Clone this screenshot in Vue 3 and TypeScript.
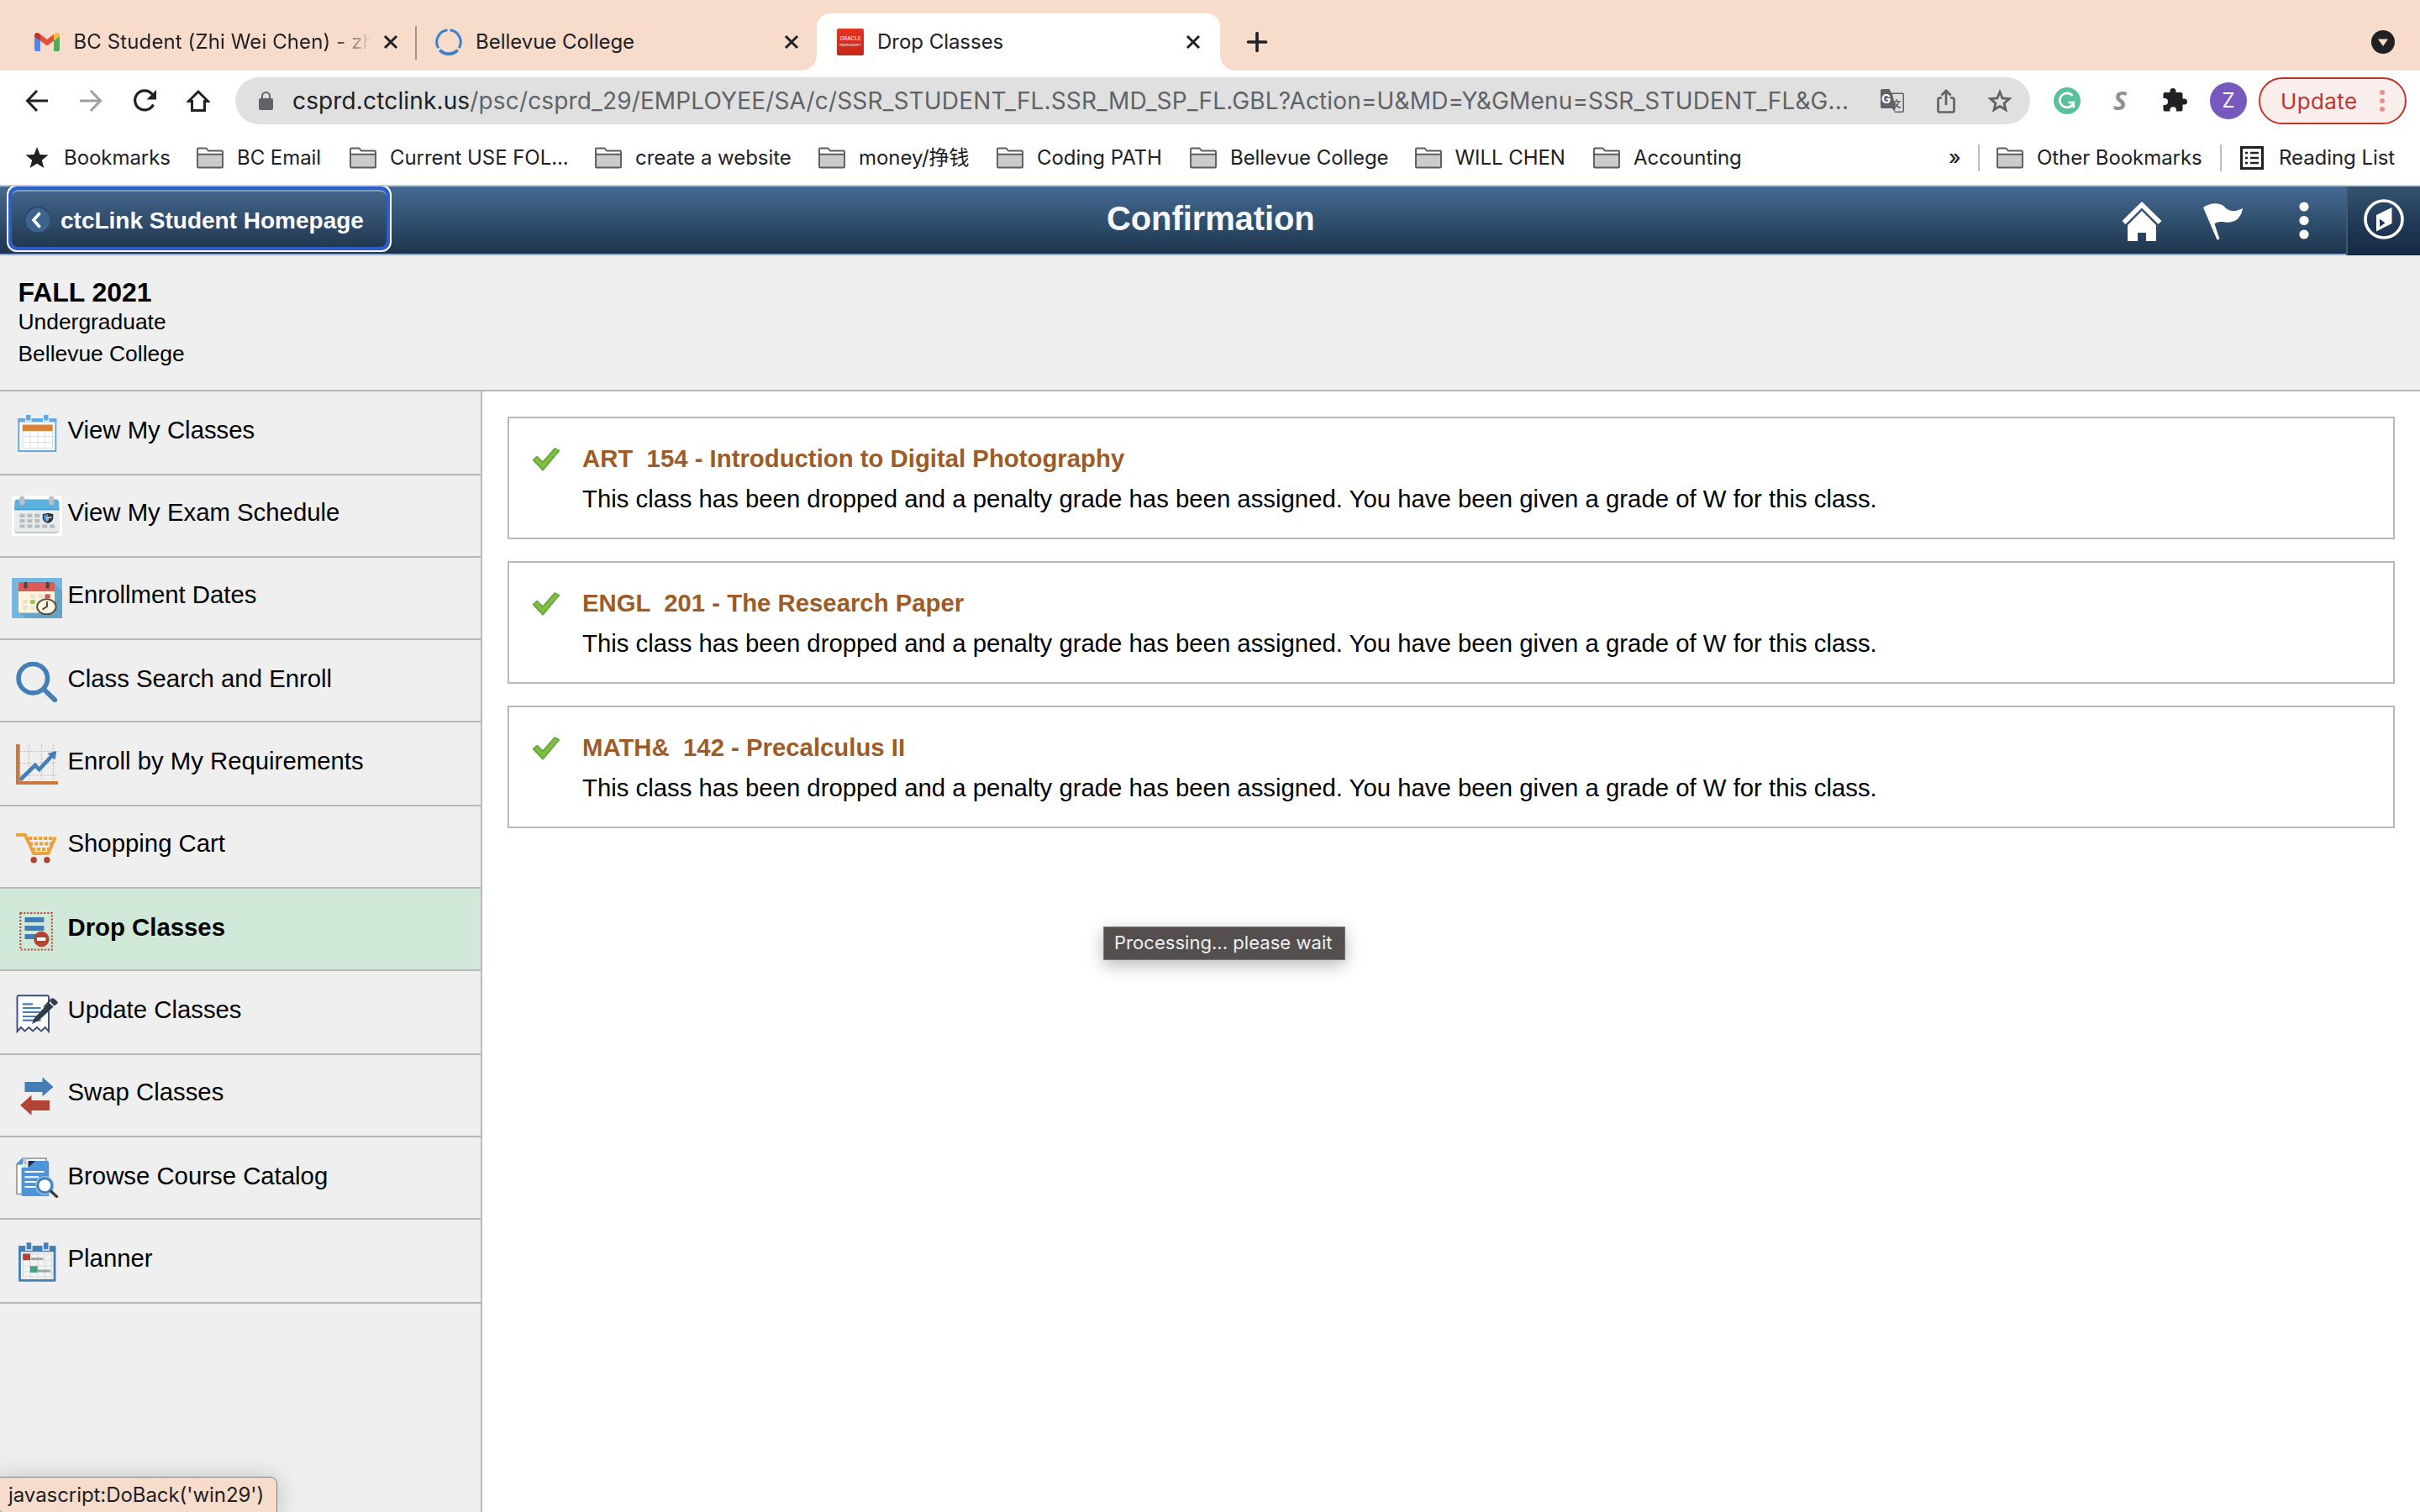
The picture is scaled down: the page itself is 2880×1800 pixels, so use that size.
<script setup lang="ts">
interface Bookmark {
  label: string
  width: number
}
interface NavItem {
  id: string
  label: string
}
interface DroppedClass {
  title: string
  message: string
}

const bookmarks: Bookmark[] = [
  { label: 'BC Email', width: 182 },
  { label: 'Current USE FOL...', width: 292 },
  { label: 'create a website', width: 266 },
  { label: 'money/挣钱', width: 212 },
  { label: 'Coding PATH', width: 230 },
  { label: 'Bellevue College', width: 267.5 },
  { label: 'WILL CHEN', width: 212.5 },
  { label: 'Accounting', width: 200 },
]

const navItems: NavItem[] = [
  { id: 'classes', label: 'View My Classes' },
  { id: 'exam', label: 'View My Exam Schedule' },
  { id: 'dates', label: 'Enrollment Dates' },
  { id: 'search', label: 'Class Search and Enroll' },
  { id: 'requirements', label: 'Enroll by My Requirements' },
  { id: 'cart', label: 'Shopping Cart' },
  { id: 'drop', label: 'Drop Classes' },
  { id: 'update', label: 'Update Classes' },
  { id: 'swap', label: 'Swap Classes' },
  { id: 'catalog', label: 'Browse Course Catalog' },
  { id: 'planner', label: 'Planner' },
]
const activeId = 'drop'

const message =
  'This class has been dropped and a penalty grade has been assigned. You have been given a grade of W for this class.'
const dropped: DroppedClass[] = [
  { title: 'ART  154 - Introduction to Digital Photography', message },
  { title: 'ENGL  201 - The Research Paper', message },
  { title: 'MATH&  142 - Precalculus II', message },
]
</script>

<template>
  <div class="window">
    <div class="tabstrip">
      <div class="tab tab-mail">
        <svg class="fav-mail" width="30" height="22" viewBox="0 0 30 22">
          <path d="M0 3V20a2 2 0 0 0 2 2H7V8.500L0 3.200Z" fill="#4c86f5" />
          <path d="M30 3V20a2 2 0 0 1-2 2H23V8.500L30 3.200Z" fill="#55a75a" />
          <path d="M7 1.800L15 8L23 1.800V9.500L15 15.600L7 9.500Z" fill="#e14e3c" />
          <path d="M0 5V3C0 .4 3-.9 5 .6L7 2V9.500L0 4.500Z" fill="#bb3529" />
          <path d="M30 5V3C30 .4 27-.9 25 .6L23 2V9.500L30 4.500Z" fill="#f3bd42" />
        </svg>
        <span class="tab-title fade">BC Student (Zhi Wei Chen) - zh</span>
        <svg class="close" width="18" height="18" viewBox="0 0 18 18"><path d="M2 2L16 16M16 2L2 16" /></svg>
      </div>
      <div class="tab tab-bc">
        <svg class="fav-bc" width="32" height="32" viewBox="0 0 32 32">
          <g fill="none" stroke="#3c82c8" stroke-width="3">
            <path d="M14.500 1.800A14.300 14.300 0 0 0 3.700 23.200" />
            <path d="M17.500 1.800A14.300 14.300 0 0 1 28.300 23.200" />
            <path d="M5.400 25.500A14.300 14.300 0 0 0 26.600 25.500" stroke-width="4" />
          </g>
        </svg>
        <span class="tab-title">Bellevue College</span>
        <svg class="close" width="18" height="18" viewBox="0 0 18 18"><path d="M2 2L16 16M16 2L2 16" /></svg>
      </div>
      <div class="tab tab-active">
        <span class="fav-oracle"><i>ORACLE</i><i class="ps">PEOPLESOFT</i></span>
        <span class="tab-title">Drop Classes</span>
        <svg class="close" width="18" height="18" viewBox="0 0 18 18"><path d="M2 2L16 16M16 2L2 16" /></svg>
      </div>
      <svg class="new-tab" width="26" height="26" viewBox="0 0 26 26">
        <path d="M13 2.500V23.500M2.500 13H23.500" stroke="#1f2023" stroke-width="3.600" stroke-linecap="round" />
      </svg>
      <svg class="tab-search" width="28" height="28" viewBox="0 0 28 28">
        <circle cx="14" cy="14" r="14" fill="#202124" />
        <path d="M8 10.500H20L14 19Z" fill="#f7dccb" />
      </svg>
    </div>

    <div class="toolbar">
      <svg class="tb-back" width="28" height="28" viewBox="0 0 28 28">
        <path d="M27 14H3M14 2L2.500 14L14 26" fill="none" stroke="#202124" stroke-width="3" />
      </svg>
      <svg class="tb-forward" width="28" height="28" viewBox="0 0 28 28">
        <path d="M1 14H25M14 2L25.500 14L14 26" fill="none" stroke="#9d9ea0" stroke-width="3" />
      </svg>
      <svg class="tb-reload" width="30" height="28" viewBox="0 0 30 28">
        <path d="M24.500 18.500A11.500 11.500 0 1 1 22.500 5.500L25 8.200" fill="none" stroke="#202124" stroke-width="3.200" />
        <path d="M28 1V12.500H16.500Z" fill="#202124" />
      </svg>
      <svg class="tb-home" width="28" height="28" viewBox="0 0 28 28">
        <path d="M14 3L2.500 14.500H6.500V25.500H21.500V14.500H25.500Z" fill="none" stroke="#202124" stroke-width="3" />
      </svg>
      <div class="omnibox">
        <svg class="lock" width="17" height="22" viewBox="0 0 17 22">
          <rect x="0" y="8" width="17" height="14" rx="2" fill="#5f6368" />
          <path d="M4 9V5.500a4.500 4.500 0 0 1 9 0V9" fill="none" stroke="#5f6368" stroke-width="2" />
        </svg>
        <span class="url"><b>csprd.ctclink.us</b>/psc/csprd_29/EMPLOYEE/SA/c/SSR_STUDENT_FL.SSR_MD_SP_FL.GBL?Action=U&amp;MD=Y&amp;GMenu=SSR_STUDENT_FL&amp;G...</span>
        <svg class="ob-translate" width="28" height="28" viewBox="0 0 28 28">
          <path d="M2 0H10.500L13 4.500H26a2 2 0 0 1 2 2V26a2 2 0 0 1-2 2H17L14 23H2a2 2 0 0 1-2-2V2a2 2 0 0 1 2-2Z" fill="#5f6368" />
          <path d="M14 6H25.500a1 1 0 0 1 1 1V25.500a1 1 0 0 1-1 1H16.500L18 22Z" fill="#e0e0e0" />
          <text x="1" y="16.500" font-size="15" font-weight="700" fill="#fff">G</text>
          <text x="13.500" y="22" font-size="11" font-weight="700" fill="#5f6368">文</text>
        </svg>
        <svg class="ob-share" width="22" height="29" viewBox="0 0 22 29">
          <path d="M6 10.500H3.500a2 2 0 0 0-2 2V25.500a2 2 0 0 0 2 2H18.500a2 2 0 0 0 2-2V12.500a2 2 0 0 0-2-2H16M11 19V2.500M5.500 7.500L11 2L16.500 7.500" fill="none" stroke="#5f6368" stroke-width="2.700" />
        </svg>
        <svg class="ob-star" width="30" height="29" viewBox="0 0 30 29">
          <path d="M15 3.500L18.100 11L26.200 11.600L20 16.900L22 24.800L15 20.500L8 24.800L10 16.900L3.800 11.600L11.900 11Z" fill="none" stroke="#5f6368" stroke-width="2.800" />
        </svg>
      </div>
      <svg class="ext-g" width="32" height="32" viewBox="0 0 32 32">
        <circle cx="16" cy="16" r="16" fill="#58c09b" />
        <path d="M22.500 10A8.500 8.500 0 1 0 23.300 19.500M17.500 18H23.800V24.500" fill="none" stroke="#fff" stroke-width="2.600" />
      </svg>
      <span class="ext-s">S</span>
      <svg class="ext-puzzle" width="30" height="30" viewBox="0 0 30 30">
        <path d="M2.500 6H8.500V4.500a3.500 3.500 0 0 1 7 0V6H21.500a2 2 0 0 1 2 2V13.500H25.500a3.500 3.500 0 0 1 0 7H23.500V26.500a2 2 0 0 1-2 2H16V27a3.800 3.800 0 0 0-7.600 0V28.500H2.500a2 2 0 0 1-2-2V21H2a4 4 0 0 0 0-8H.5V8a2 2 0 0 1 2-2Z" fill="#202124" />
      </svg>
      <span class="avatar">Z</span>
      <div class="update">
        <span>Update</span>
        <svg width="6" height="28" viewBox="0 0 6 28">
          <circle cx="3" cy="4" r="3" fill="#ec9188" />
          <circle cx="3" cy="14" r="3" fill="#ec9188" />
          <circle cx="3" cy="24" r="3" fill="#ec9188" />
        </svg>
      </div>
    </div>

    <div class="bookmarks">
      <div class="bm bm-star">
        <svg width="28" height="26" viewBox="0 0 28 26">
          <path d="M14 0L17.500 8.900L27.500 9.600L19.800 15.700L22.300 25L14 19.800L5.700 25L8.200 15.700L.5 9.600L10.500 8.900Z" fill="#202124" />
        </svg>
        <span>Bookmarks</span>
      </div>
      <div v-for="b in bookmarks" :key="b.label" class="bm" :style="{ width: b.width + 'px' }">
        <svg class="folder" width="32" height="26" viewBox="0 0 32 26">
          <path d="M1 24V2.500a1 1 0 0 1 1-1H11.500L14 4.500H30a1 1 0 0 1 1 1V24Z" fill="#fff" />
          <rect x="1" y="9" width="30" height="15" fill="#cbcbcb" />
          <path d="M1 23.500V2.500a1 1 0 0 1 1-1H11.500L14 4.500H30a1 1 0 0 1 1 1V23.500a1 1 0 0 1-1 1H2a1 1 0 0 1-1-1ZM1 8.800H31" fill="none" stroke="#5c5c5e" stroke-width="1.900" />
        </svg>
        <span>{{ b.label }}</span>
      </div>
      <div class="bm-right">
        <span class="more">»</span>
        <i class="vline"></i>
        <div class="bm bm-other">
          <svg class="folder" width="32" height="26" viewBox="0 0 32 26">
            <path d="M1 24V2.500a1 1 0 0 1 1-1H11.500L14 4.500H30a1 1 0 0 1 1 1V24Z" fill="#fff" />
            <rect x="1" y="9" width="30" height="15" fill="#cbcbcb" />
            <path d="M1 23.500V2.500a1 1 0 0 1 1-1H11.500L14 4.500H30a1 1 0 0 1 1 1V23.500a1 1 0 0 1-1 1H2a1 1 0 0 1-1-1ZM1 8.800H31" fill="none" stroke="#5c5c5e" stroke-width="1.900" />
          </svg>
          <span>Other Bookmarks</span>
        </div>
        <i class="vline"></i>
        <div class="bm bm-reading">
          <svg width="28" height="28" viewBox="0 0 28 28">
            <rect x="1.500" y="1.500" width="25" height="25" fill="none" stroke="#202124" stroke-width="3" />
            <path d="M6 8H9M12 8H22M6 14H9M12 14H22M6 20H9M12 20H22" stroke="#202124" stroke-width="2.600" />
          </svg>
          <span>Reading List</span>
        </div>
      </div>
    </div>

    <header class="banner">
      <div class="banner-main">
        <div class="back">
          <div class="back-inner">
            <svg width="32" height="34" viewBox="0 0 32 34">
              <circle cx="16" cy="16" r="15.500" fill="#2a476a" />
              <circle cx="16" cy="17" r="14.500" fill="#3d648e" />
              <path d="M18.500 8.500L11 17L18.500 25.500" fill="none" stroke="#fff" stroke-width="3.600" />
            </svg>
            <span>ctcLink Student Homepage</span>
          </div>
        </div>
        <h1>Confirmation</h1>
        <svg class="bn-home" width="48" height="50" viewBox="0 0 48 50">
          <path d="M24 1L47.500 24L43.500 28L24 8.500L4.500 28L.5 24Z" fill="#fff" />
          <path d="M24 12L41 29V48H29V38H19V48H7V29Z" fill="#fff" />
        </svg>
        <svg class="bn-flag" width="50" height="46" viewBox="0 0 50 46">
          <path d="M1 6C8 .5 19-.5 25 4C31 11 38 12 48 7C46 20 37 25 27 23.500C20 22.500 17 23.500 14.500 25.500L20.500 43.500L17.500 44.500Z" fill="#fff" />
        </svg>
        <svg class="bn-dots" width="14" height="48" viewBox="0 0 14 48">
          <circle cx="7" cy="7" r="5.600" fill="#fff" />
          <circle cx="7" cy="23.500" r="5.600" fill="#fff" />
          <circle cx="7" cy="40" r="5.600" fill="#fff" />
        </svg>
      </div>
      <div class="banner-nav">
        <svg width="48" height="48" viewBox="0 0 48 48">
          <circle cx="24" cy="24" r="22" fill="none" stroke="#fff" stroke-width="3.600" />
          <path d="M33.500 10V29L15 38.500V19ZM19 23.500V33L25.500 28.500Z" fill="#fff" fill-rule="evenodd" />
        </svg>
      </div>
    </header>

    <section class="term">
      <h2>FALL 2021</h2>
      <p>Undergraduate</p>
      <p>Bellevue College</p>
    </section>

    <div class="content">
      <nav class="sidebar">
        <div v-for="n in navItems" :key="n.id" class="row" :class="{ active: n.id === activeId }">
          <svg class="row-icon" width="60" height="48" viewBox="0 0 60 48">
            <template v-if="n.id === 'classes'">
              <rect x="8.300" y="7" width="44" height="38" fill="#fff" stroke="#64a9e0" stroke-width="2" />
              <rect x="7.300" y="6" width="46" height="4.500" fill="#64a9e0" />
              <rect x="16" y="2" width="7.500" height="8" fill="#efefef" />
              <rect x="37" y="2" width="7.500" height="8" fill="#efefef" />
              <rect x="17" y="2" width="5.500" height="6.500" fill="#64a9e0" />
              <rect x="38" y="2" width="5.500" height="6.500" fill="#64a9e0" />
              <path d="M13 21V41.500H48.500V21M13 27.500H48.500M13 34.500H48.500M22 21V41.500M31 21V41.500M39.500 21V41.500" fill="none" stroke="#dcdfe1" stroke-width="1.200" />
              <rect x="12.700" y="13.500" width="36" height="7.700" fill="#d98339" />
            </template>
            <template v-else-if="n.id === 'exam'">
              <rect width="60" height="48" fill="#fff" />
              <path d="M3.300 12V41a4 4 0 0 0 4 4H52.300a4 4 0 0 0 4-4V12Z" fill="#bfc6c8" />
              <path d="M3.300 12V39a4 4 0 0 0 4 4H52.300a4 4 0 0 0 4-4V12Z" fill="#e9ecee" />
              <path d="M3.300 17.300V8.500a4 4 0 0 1 4-4H52.300a4 4 0 0 1 4 4V17.300Z" fill="#5ab1df" />
              <path d="M3.300 15.800H56.300V17.300H3.300Z" fill="#4a9fcf" />
              <rect x="9.300" y=".5" width="6" height="11" rx="3" fill="#b9c1c4" />
              <rect x="44.300" y=".5" width="6" height="11" rx="3" fill="#b9c1c4" />
              <path d="M9.500 23.800H33.300M9.500 30.100H33.300M9.500 36.500H51.500" stroke="#b5bcbe" stroke-width="4.200" stroke-dasharray="6 2.900" />
              <path d="M36.700 22L43 20.800L49.300 22V26.500C49.300 30 46 32 43 33C40 32 36.700 30 36.700 26.500Z" fill="#2c3338" />
              <path d="M38 23L43 22V31.500C40 30.500 38 28.500 38 26.500Z" fill="#4a8fc9" />
              <path d="M41 25H47.500V27H44V29.500H41Z" fill="#aebbc4" />
            </template>
            <template v-else-if="n.id === 'dates'">
              <rect width="60" height="48" fill="#75b8df" />
              <path d="M51 7L60 16V48H17L10 41.500H51Z" fill="#68a4c8" />
              <path d="M8 15H51V39.500a2 2 0 0 1-2 2H10a2 2 0 0 1-2-2Z" fill="#fdf3df" />
              <path d="M8 16V7a2 2 0 0 1 2-2H49a2 2 0 0 1 2 2V16Z" fill="#dc5b54" />
              <rect x="14.300" y="4.700" width="4.200" height="8" rx="1.800" fill="#4b4640" />
              <rect x="40.500" y="4.700" width="4.200" height="8" rx="1.800" fill="#4b4640" />
              <g fill="#ece3cf">
                <rect x="22" y="19.500" width="6" height="4.800" rx="1" />
                <rect x="31" y="19.500" width="6" height="4.800" rx="1" />
                <rect x="13" y="26" width="6" height="4.800" rx="1" />
                <rect x="13" y="33" width="6" height="4.800" rx="1" />
                <rect x="22" y="33" width="6" height="4.800" rx="1" />
              </g>
              <rect x="39.500" y="19.300" width="6.200" height="5" fill="#dc5058" />
              <rect x="22" y="26" width="6" height="5" rx="1" fill="#9fc95c" />
              <ellipse cx="41.400" cy="34.300" rx="11.300" ry="9" fill="#fdf5e4" stroke="#57503f" stroke-width="2" />
              <path d="M42 28V34L36.500 37.500" fill="none" stroke="#3c382f" stroke-width="1.700" />
            </template>
            <template v-else-if="n.id === 'search'">
              <circle cx="25.300" cy="19.700" r="17.200" fill="none" stroke="#437fb5" stroke-width="5.600" />
              <path d="M38 32.500L51.200 45.200" stroke="#437fb5" stroke-width="5.800" stroke-linecap="round" />
            </template>
            <template v-else-if="n.id === 'requirements'">
              <path d="M20.500 0V44M35.500 0V44M49.500 0V44M10 8.500H55M10 22.500H55M10 37H55" stroke="#c3c6c8" stroke-width="1.200" stroke-dasharray="2.500 1.500" />
              <path d="M10 42.500L27.800 25L32.700 30L49 12.500" fill="none" stroke="#437fb5" stroke-width="4.600" />
              <path d="M53.300 8L51.500 18.500L42.500 11Z" fill="#437fb5" />
              <path d="M5 0H9.700V44H55V48H5Z" fill="#d0763c" />
            </template>
            <template v-else-if="n.id === 'cart'">
              <path d="M20 14H50M21 20.500H47M24 27H45" stroke="#e8a33d" stroke-width="4" stroke-dasharray="4.300 1.700" />
              <path d="M5 10H16L26 32H43.500L51.800 12.500" fill="none" stroke="#e8a33d" stroke-width="4" stroke-linejoin="round" />
              <circle cx="26.200" cy="39.700" r="3.700" fill="#b14434" />
              <circle cx="41.900" cy="39.700" r="3.700" fill="#b14434" />
            </template>
            <template v-else-if="n.id === 'drop'">
              <rect x="10.300" y="3" width="37.500" height="43.500" fill="none" stroke="#b14434" stroke-width="2" stroke-dasharray="2 2" />
              <path d="M15.500 11H38.400M15.500 21H38.400M15.500 31H38.400" stroke="#437fb5" stroke-width="6" />
              <circle cx="35.400" cy="34" r="9.200" fill="#b14434" />
              <rect x="30" y="32" width="10.400" height="4" fill="#fff" />
            </template>
            <template v-else-if="n.id === 'update'">
              <path d="M6.500 46V5a1.500 1.500 0 0 1 1.500-1.700H42.500a1.500 1.500 0 0 1 1.500 1.700V46L39.800 41L35 45.500L30 41L25 45.500L20.500 41L15.500 45.500L11 41Z" fill="#fff" stroke="#3c4c7c" stroke-width="1.900" />
              <path d="M13 13.300H25M13 18H34.600M13 23H34.600M13 28H34.600M13 32.700H34.600" stroke="#437fb5" stroke-width="2.200" />
              <path d="M24 37L27 30L44 11.500L49.500 16.500L32 33Z" fill="#313b4a" />
              <path d="M45.500 10L50 6.500L54.500 10.500V12.500L50.500 15.500Z" fill="#313b4a" />
              <path d="M38 17L47 7.500L49.500 7" fill="none" stroke="#313b4a" stroke-width="1.400" />
            </template>
            <template v-else-if="n.id === 'swap'">
              <path d="M15.500 8H36.500V2.300L49.500 13.900L36.500 25.300V20H15.500Z" fill="#437fb5" />
              <path d="M45 30H23.500V23.700L10.100 35.700L23.500 47.700V42H45Z" fill="#b14434" />
            </template>
            <template v-else-if="n.id === 'catalog'">
              <path d="M6 43.500V8L13 1H41V6H16V43.500Z" fill="#fff" stroke="#8a9496" stroke-width="1.600" />
              <path d="M5.500 8.500L13 0V8.500Z" fill="#4f94d8" />
              <path d="M13 2L20 1.500L13 8Z" fill="#c6cbce" />
              <path d="M11.500 12.500L20 4H42a2.200 2.200 0 0 1 2.200 2.200V46H13.500a2 2 0 0 1-2-2Z" fill="#4f94d8" />
              <path d="M19.500 4H28L19.500 12Z" fill="#1f2a56" />
              <path d="M19.500 4V12H11.500Z" fill="#dfe3e6" />
              <path d="M15.500 17H38.500M15.500 23.300H32M15.500 29H29M15.500 35H28" stroke="#fff" stroke-width="2" />
              <circle cx="39.300" cy="33.300" r="11.200" fill="#9cc4ea" />
              <circle cx="39.300" cy="33.300" r="8.500" fill="#fff" stroke="#437fb5" stroke-width="3" />
              <path d="M47 40.500L53.500 46.500" stroke="#313b4a" stroke-width="3.200" stroke-linecap="round" />
            </template>
            <template v-else>
              <rect x="9.500" y="6.600" width="41.500" height="39.700" fill="#f3f4f4" stroke="#437fb5" stroke-width="2.800" />
              <rect x="8.200" y="5.300" width="44" height="7" fill="#437fb5" />
              <rect x="16.200" y="1.300" width="8.400" height="9.500" fill="#efefef" />
              <rect x="36.500" y="1.300" width="8.400" height="9.500" fill="#efefef" />
              <rect x="17.600" y="1.300" width="5.600" height="8" fill="#437fb5" />
              <rect x="37.900" y="1.300" width="5.600" height="8" fill="#437fb5" />
              <path d="M13.500 15H47.500V42H13.500ZM13.500 22H47.500M13.500 29H47.500M13.500 36H47.500M22 15V42M31 15V42M39.500 15V42" fill="none" stroke="#d7dadb" stroke-width="1.200" />
              <rect x="13.200" y="14.500" width="8.800" height="7.700" fill="#b14434" />
              <rect x="21.700" y="29.300" width="9" height="7.600" fill="#4b9e86" />
              <path d="M23 20.700H37.300M31 35H46" stroke="#9da6a7" stroke-width="2.800" />
            </template>
          </svg>
          <span class="row-label">{{ n.label }}</span>
        </div>
      </nav>

      <main class="main">
        <article v-for="d in dropped" :key="d.title" class="card">
          <svg class="check" width="34" height="30" viewBox="0 0 34 30">
            <path d="M1 15.500L6 11L13 17.500L27 1.500L33 4.500L13 28.500Z" fill="#6dae3d" stroke="#5c9e3c" stroke-width="1" stroke-linejoin="round" />
            <path d="M3.500 15.500L6 13L13 20L27.500 3.500L31 4.800L13 25.500Z" fill="#80c044" />
          </svg>
          <div class="card-text">
            <h3>{{ d.title }}</h3>
            <p>{{ d.message }}</p>
          </div>
        </article>
      </main>
    </div>

    <div class="tooltip">Processing... please wait</div>
    <div class="status">javascript:DoBack('win29')</div>
  </div>
</template>

<style>
html,
body {
  margin: 0;
  background: #fff;
}
</style>

<style scoped>
* {
  box-sizing: border-box;
}
.window {
  position: relative;
  display: flex;
  flex-direction: column;
  width: 2880px;
  height: 1800px;
  overflow: hidden;
  background: #fff;
  color: #000;
  font-family: 'Liberation Sans', Arial, sans-serif;
}
svg {
  display: block;
  flex: none;
}
svg text {
  font-family: Inter, 'Noto Sans CJK SC', sans-serif;
}
.tabstrip,
.toolbar,
.bookmarks {
  display: flex;
  flex: none;
  font-family: Inter, 'Noto Sans CJK SC', sans-serif;
  color: #202124;
}

/* tabs */
.tabstrip {
  height: 84px;
  padding-top: 16px;
  background: #f7dccb;
}
.tab {
  display: flex;
  align-items: center;
  height: 68px;
}
.tab-title {
  flex: 1;
  min-width: 0;
  white-space: nowrap;
  font-size: 24px;
  line-height: 36px;
  margin-top: -1px;
  letter-spacing: -0.03px;
}
.tab-mail .tab-title {
  flex: none;
  width: 354px;
  letter-spacing: 0.11px;
}
.fade {
  -webkit-mask-image: linear-gradient(to right, #000 306px, transparent 354px);
  mask-image: linear-gradient(to right, #000 306px, transparent 354px);
}
.close {
  fill: none;
  stroke: #202124;
  stroke-width: 3;
}
.tab-mail {
  position: relative;
  width: 496px;
  padding-left: 41px;
}
.tab-mail::after {
  content: '';
  position: absolute;
  right: 0;
  top: 15px;
  width: 2px;
  height: 40px;
  background: #a3918a;
}
.tab-mail .tab-title {
  margin-left: 16.500px;
}
.tab-mail .close {
  margin-left: 14px;
}
.tab-bc {
  width: 476px;
  padding: 0 21px 0 22px;
}
.tab-bc .tab-title,
.tab-active .tab-title {
  margin-left: 16px;
}
.tab-active {
  position: relative;
  width: 480px;
  padding: 0 23px 0 24px;
  background: #fff;
  border-radius: 16px 16px 0 0;
}
.tab-active::before,
.tab-active::after {
  content: '';
  position: absolute;
  bottom: 0;
  width: 18px;
  height: 18px;
}
.tab-active::before {
  left: -18px;
  background: radial-gradient(circle at 0 0, transparent 17.5px, #fff 18px);
}
.tab-active::after {
  right: -18px;
  background: radial-gradient(circle at 100% 0, transparent 17.5px, #fff 18px);
}
.fav-oracle {
  display: flex;
  flex-direction: column;
  justify-content: center;
  align-items: center;
  gap: 4px;
  width: 32px;
  height: 32px;
  border-radius: 2px;
  background: linear-gradient(#e73323, #c4271b);
  color: #fbd5d0;
  font-size: 6.2px;
  line-height: 4px;
  font-weight: 600;
}
.fav-oracle i {
  font-style: normal;
}
.fav-oracle .ps {
  font-size: 3.9px;
}
.new-tab {
  margin: 21px 0 0 31px;
}
.tab-search {
  margin: 20px 30px 0 auto;
}

/* toolbar */
.toolbar {
  align-items: center;
  height: 64px;
  padding-top: 8px;
}
.tb-back {
  margin-left: 30px;
}
.tb-forward {
  margin-left: 36px;
}
.tb-reload {
  margin-left: 36px;
}
.tb-home {
  margin-left: 34px;
}
.omnibox {
  display: flex;
  align-items: center;
  width: 2136px;
  height: 56px;
  margin-left: 30px;
  padding-left: 28px;
  border-radius: 28px;
  background: #e0e0e0;
}
.url {
  width: 1890px;
  margin-left: 23px;
  font-size: 28px;
  line-height: 40px;
  letter-spacing: 0.146px;
  white-space: nowrap;
  color: #5f6368;
}
.url b {
  font-weight: 400;
  color: #202124;
}
.ob-share {
  margin-left: 39px;
}
.ob-star {
  margin-left: 38px;
}
.ext-g {
  margin-left: 28px;
}
.ext-s {
  width: 28px;
  margin-left: 39px;
  font: italic 700 30px/40px 'Open Sans', sans-serif;
  color: #8f8f8f;
}
.ext-puzzle {
  margin: -2px 0 0 31px;
}
.avatar {
  width: 44px;
  height: 44px;
  margin-left: 26px;
  border-radius: 50%;
  background: #7759bd;
  color: #fff;
  font-size: 24px;
  line-height: 44px;
  text-align: center;
}
.update {
  display: flex;
  align-items: center;
  justify-content: space-between;
  width: 176px;
  height: 56px;
  margin-left: 14px;
  padding: 0 24px;
  border: 2px solid #c0352a;
  border-radius: 28px;
  background: #faeeed;
  color: #c0352a;
  font-size: 26px;
  letter-spacing: 0.39px;
}

/* bookmarks */
.bookmarks {
  align-items: center;
  height: 74px;
  padding: 7px 0 0 30px;
  border-bottom: 2px solid #c8c9c9;
  font-size: 24px;
  line-height: 36px;
  letter-spacing: -0.06px;
  white-space: nowrap;
}
.bm {
  display: flex;
  flex: none;
  align-items: center;
  gap: 16px;
}
.bm-star {
  width: 204px;
  gap: 18px;
}
.bm-right {
  display: flex;
  align-items: center;
  width: 561px;
  margin-left: auto;
}
.more {
  width: 35px;
  font-weight: 500;
}
.vline {
  width: 2px;
  height: 32px;
  background: #bdbdbd;
}
.bm-other {
  width: 266px;
  margin-left: 20px;
}
.bm-reading {
  margin-left: 22px;
  gap: 18px;
}

/* banner */
.banner {
  display: flex;
  flex: none;
  height: 82px;
  overflow: hidden;
}
.banner-main {
  display: flex;
  align-items: flex-start;
  width: 2792px;
  border-bottom: 2px solid #8fadd6;
  background: linear-gradient(#456a92, #30506f 50%, #1f344e);
}
.back {
  flex: none;
  width: 458px;
  height: 80px;
  margin: -2px 0 0 8px;
  border: 2px solid #fff;
  border-radius: 12px;
  background: #2b5ecb;
  padding: 4px;
}
.back-inner {
  display: flex;
  align-items: center;
  height: 68px;
  padding: 2px 0 0 15px;
  border-top: 2px solid #7c9fc1;
  border-radius: 8px;
  background: linear-gradient(#42658b, #22384f);
  color: #fff;
  font-size: 28px;
  font-weight: 700;
  line-height: 36px;
}
.back-inner span {
  margin: 2px 0 0 11px;
}
h1 {
  flex: none;
  width: 1204px;
  margin: 14px 0 0 851px;
  font-size: 40px;
  line-height: 48px;
  letter-spacing: -0.1px;
  color: #f5f7fa;
}
.bn-home {
  margin: 17px 0 0 4px;
}
.bn-flag {
  margin: 19px 0 0 48px;
}
.bn-dots {
  margin: 17px 0 0 64px;
}
.banner-nav {
  display: flex;
  width: 88px;
  padding: 15px 0 0 19px;
  border-left: 2px solid #405b79;
  background: linear-gradient(#35536f, #213b59 50%, #172a43);
}

/* term header */
.term {
  flex: none;
  height: 162px;
  padding: 24px 0 0 21.500px;
  border-bottom: 2px solid #b9b9b9;
  background: #efefef;
}
h2 {
  margin: 0;
  font-size: 32px;
  line-height: 40px;
  letter-spacing: -0.05px;
}
.term p {
  margin: 0;
  font-size: 26.400px;
  line-height: 38px;
}
.term h2 + p {
  margin-top: -4px;
}

/* sidebar */
.content {
  display: flex;
  flex: 1;
  min-height: 0;
}
.sidebar {
  flex: none;
  width: 574px;
  border-right: 2px solid #b9b9b9;
  background: #efefef;
}
.row {
  --icon: 24px;
  --text: 24px;
  display: flex;
  align-items: flex-start;
  height: 98px;
  padding-left: 14px;
  border-bottom: 2px solid #b9b9b9;
}
.row:nth-child(1),
.row:nth-child(5),
.row:nth-child(8),
.row:nth-child(11) {
  height: 100px;
}
.row:nth-child(1) {
  --icon: 26px;
  --text: 26px;
}
.row:nth-child(4),
.row:nth-child(5),
.row:nth-child(7),
.row:nth-child(8),
.row:nth-child(11) {
  --icon: 26px;
  --text: 26px;
}
.row:nth-child(10) {
  --text: 26px;
}
.row-icon {
  margin-top: var(--icon);
}
.row-label {
  margin: var(--text) 0 0 6.500px;
  font-size: 29.330px;
  line-height: 40px;
  white-space: nowrap;
}
.active {
  background: #cfe8d7;
}
.active .row-label {
  font-weight: 700;
}

/* result cards */
.main {
  display: flex;
  flex-direction: column;
  gap: 26px;
  width: 2306px;
  padding: 30px 30px 0;
}
.card {
  display: flex;
  align-items: flex-start;
  height: 146px;
  padding: 28px 0 0 27px;
  border: 2px solid #b9b9b9;
}
.check {
  margin-top: 6px;
}
.card-text {
  margin-left: 26px;
}
h3,
.card-text p {
  margin: 0;
  font-size: 29.330px;
  line-height: 40px;
  white-space: pre;
}
h3 {
  color: #9d5b27;
}
.card-text p {
  margin-top: 8px;
}

/* floating labels */
.tooltip {
  position: absolute;
  left: 1313px;
  top: 1103px;
  width: 288px;
  height: 40px;
  padding-left: 12px;
  border: 1.500px solid #7b7878;
  background: #544f4e;
  color: #efefef;
  font: 22px/37px Inter, sans-serif;
  letter-spacing: 0.04px;
  white-space: nowrap;
  box-shadow: 0 6px 20px rgba(0, 0, 0, 0.28);
}
.status {
  position: absolute;
  left: -2px;
  top: 1758px;
  width: 332px;
  height: 44px;
  padding-left: 11px;
  border: 1.500px solid #85817f;
  border-radius: 0 8px 0 8px;
  background: #f7dccb;
  color: #202124;
  font: 24px/42px Inter, sans-serif;
  letter-spacing: -0.06px;
  white-space: nowrap;
  box-shadow: 0 2px 28px rgba(0, 0, 0, 0.22);
}
</style>
